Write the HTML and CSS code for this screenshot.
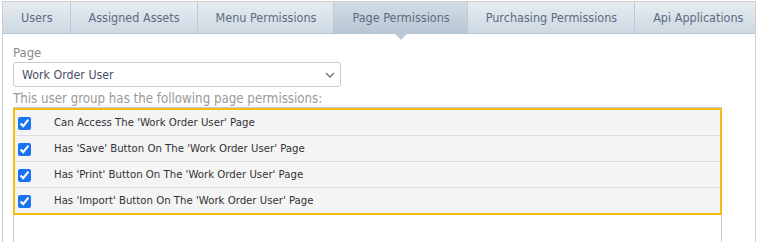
FILE: index.html
```html
<!DOCTYPE html>
<html lang="en">
<head>
    <meta charset="UTF-8">
    <meta name="viewport" content="width=device-width, initial-scale=1.0">
    <title>User Group Permissions</title>
    <link rel="stylesheet" href="styles.css">
</head>
<body>
    <div class="frame">
        <ul class="tabs">
            <li class="tab">Users</li>
            <li class="tab">Assigned Assets</li>
            <li class="tab">Menu Permissions</li>
            <li class="tab active">Page Permissions</li>
            <li class="tab">Purchasing Permissions</li>
            <li class="tab last">Api Applications</li>
        </ul>

        <div class="content">
            <label class="field-label" for="pageSelect">Page</label>
            <div class="select-wrap">
                <select id="pageSelect" class="select">
                    <option>Work Order User</option>
                </select>
                <svg class="chevron" width="10" height="6" viewBox="0 0 10 6">
                    <path d="M1 1 L5 5 L9 1" fill="none" stroke="#7a8290" stroke-width="1.6"/>
                </svg>
            </div>
            <p class="hint">This user group has the following page permissions:</p>

            <div class="perm-list">
                <div class="highlight">
                    <label class="perm-row"><input type="checkbox" checked><span>Can Access The 'Work Order User' Page</span></label>
                    <label class="perm-row"><input type="checkbox" checked><span>Has 'Save' Button On The 'Work Order User' Page</span></label>
                    <label class="perm-row"><input type="checkbox" checked><span>Has 'Print' Button On The 'Work Order User' Page</span></label>
                    <label class="perm-row"><input type="checkbox" checked><span>Has 'Import' Button On The 'Work Order User' Page</span></label>
                </div>
            </div>
        </div>
    </div>
</body>
</html>
```

FILE: styles.css
```css
body {
    margin: 0;
    padding: 1px 1px 0 2px;
    background-color: #fff;
    font-family: 'DejaVu Sans Condensed', 'DejaVu Sans', Tahoma, sans-serif;
}
.frame {
    display: flex;
    flex-direction: column;
    height: 241px;
    box-sizing: border-box;
    border: 1px solid #cfcfcf;
    border-bottom: none;
    overflow: hidden;
}
.tabs {
    display: flex;
    margin: 0;
    padding: 0;
    list-style: none;
    height: 31px;
    border-bottom: 1px solid #b7c6d3;
    background-image: linear-gradient(#e6ecf1, #cdd8e1);
}
.tab {
    position: relative;
    display: flex;
    align-items: center;
    padding: 0 17px 0 18px;
    font-size: 12.5px;
    color: #5d6b82;
    border-right: 1px solid #b9c9d6;
    white-space: nowrap;
}
.tab.last {
    flex: 1;
    border-right: none;
}
.tab.active {
    background-image: linear-gradient(#d2dce5, #b7c7d4);
}
.tab.active::after {
    content: '';
    position: absolute;
    left: 50%;
    bottom: -7px;
    margin-left: -6px;
    border-left: 6px solid transparent;
    border-right: 6px solid transparent;
    border-top: 6px solid #bccbd7;
}
.content {
    flex: 1;
    display: flex;
    flex-direction: column;
    padding: 11px 33px 0 10px;
}
.field-label {
    font-size: 13px;
    line-height: 16px;
    color: #8a8a8a;
}
.select-wrap {
    position: relative;
    width: 328px;
    margin-top: 1px;
}
.select {
    -webkit-appearance: none;
    appearance: none;
    width: 100%;
    height: 25px;
    padding: 0 8px;
    border: 1px solid #cccccc;
    border-radius: 3px;
    background-color: #fff;
    font-family: inherit;
    font-size: 12.3px;
    color: #4a5068;
}
.chevron {
    position: absolute;
    right: 6px;
    top: 10px;
}
.hint {
    margin: 4px 0 0;
    font-size: 13.2px;
    line-height: 16px;
    color: #9a9a9a;
}
.perm-list {
    flex: 1;
    border: 1px solid #cccccc;
    border-bottom: none;
}
.highlight {
    margin: 0 -1px;
    border: 2px solid #f6bb14;
}
.perm-row {
    display: flex;
    align-items: center;
    height: 25px;
    background-color: #f4f4f4;
    border-bottom: 1px solid #dddddd;
    font-size: 11.3px;
    color: #333;
}
.perm-row:last-child {
    border-bottom: none;
}
.perm-row input {
    width: 13px;
    height: 13px;
    margin: 1px 23px 0 3px;
    accent-color: #1a73f0;
}
```
